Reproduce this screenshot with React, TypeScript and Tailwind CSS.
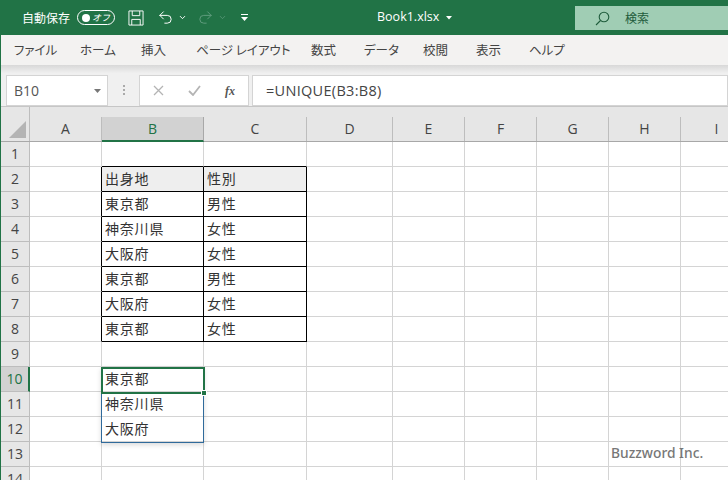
import { ChevronDown, Undo2, Redo2 } from "lucide-react";

const font = { jp: "font-['Noto_Sans_CJK_JP',sans-serif]" };

const columns = [
  { name: "A", width: "w-[72px]" },
  { name: "B", width: "w-[102px]" },
  { name: "C", width: "w-[103px]" },
  { name: "D", width: "w-[86px]" },
  { name: "E", width: "w-[72px]" },
  { name: "F", width: "w-[72px]" },
  { name: "G", width: "w-[72px]" },
  { name: "H", width: "w-[72px]" },
  { name: "I", width: "w-[72px]" },
];

const menus = [
  { label: "ファイル", width: "w-[66px]" },
  { label: "ホーム", width: "w-[61px]" },
  { label: "挿入", width: "w-[55px]" },
  { label: "ページ レイアウト", width: "w-[115px]" },
  { label: "数式", width: "w-[53px]" },
  { label: "データ", width: "w-[59px]" },
  { label: "校閲", width: "w-[53px]" },
  { label: "表示", width: "w-[53px]" },
  { label: "ヘルプ", width: "w-[60px]" },
];

const tableRows: Record<number, [string, string]> = {
  2: ["出身地", "性別"],
  3: ["東京都", "男性"],
  4: ["神奈川県", "女性"],
  5: ["大阪府", "女性"],
  6: ["東京都", "男性"],
  7: ["大阪府", "女性"],
  8: ["東京都", "女性"],
};

const spill: Record<number, string> = { 10: "東京都", 11: "神奈川県", 12: "大阪府" };

function TitleBar() {
  return (
    <div className="flex h-[35px] items-center bg-[#217346] text-white">
      <span className={`ml-[21px] text-[12px] ${font.jp}`}>自動保存</span>
      <div className="ml-[7px] flex h-[15px] w-[38px] shrink-0 items-center justify-between rounded-full border border-white pl-[4px] pr-[4px]">
        <div className="h-[8px] w-[8px] rounded-full bg-white" />
        <span className={`text-[9px] italic leading-none ${font.jp}`}>オフ</span>
      </div>
      <svg className="ml-[13px] shrink-0" width="16" height="16" viewBox="0 0 17 17" fill="none" stroke="#fff" strokeWidth="1">
        <path d="M1 1h15v15H1z" />
        <path d="M4.5 1v5h8V1M4 16v-6h9v6" />
      </svg>
      <Undo2 className="ml-[13px] shrink-0" size={17} strokeWidth={1.4} />
      <ChevronDown className="ml-[4px] shrink-0" size={9} strokeWidth={2.5} />
      <Redo2 className="ml-[10px] shrink-0 text-[#5f9c7d]" size={17} strokeWidth={1.4} />
      <ChevronDown className="ml-[4px] shrink-0 text-[#5f9c7d]" size={9} strokeWidth={2} />
      <svg className="ml-[13px] shrink-0" width="9" height="9" viewBox="0 0 9 9" fill="#fff">
        <path d="M1 1h7v1H1zM1 4h7L4.500 8z" />
      </svg>
      <div className="ml-[128px] flex w-[120px] shrink-0 items-center font-['Open_Sans',sans-serif] text-[12.5px]">
        <span>Book1.xlsx</span>
        <svg className="ml-[7px]" width="6" height="4" viewBox="0 0 6 4" fill="#fff">
          <path d="M0 0h6L3 3.500z" />
        </svg>
      </div>
      <div className="ml-[78px] mt-[1px] flex h-[24px] flex-1 items-center self-center bg-[#a0cdb4] text-[#1f5c3c]">
        <svg className="ml-[20px]" width="15" height="15" viewBox="0 0 15 15" fill="none" stroke="currentColor" strokeWidth="1.1">
          <circle cx="9" cy="6" r="4.800" />
          <path d="M5.500 9.500 1 14" />
        </svg>
        <span className={`ml-[15px] text-[12px] ${font.jp}`}>検索</span>
      </div>
    </div>
  );
}

function MenuBar() {
  return (
    <div className={`flex h-[30px] items-center bg-[#f3f2f1] pl-[13px] text-[12.5px] text-[#444] [font-feature-settings:'palt'] ${font.jp}`}>
      {menus.map((m) => (
        <span key={m.label} className={`${m.width} shrink-0`}>
          {m.label}
        </span>
      ))}
    </div>
  );
}

function FormulaBar() {
  return (
    <div className="h-[42px] border-b border-[#c6c6c6] bg-[#e6e6e6] bg-gradient-to-b from-[#d8d8d8] from-0% to-[#f0f0f0] to-[20%]">
      <div className="flex h-full items-end gap-0 pl-[5px]">
        <div className="flex h-[31px] w-[102px] items-center border border-[#d4d4d4] bg-white pl-[7px] pr-[6px] font-['Open_Sans',sans-serif] text-[14px] text-[#555]">
          <span className="flex-1">B10</span>
          <svg width="7" height="4" viewBox="0 0 7 4" fill="#777">
            <path d="M0 0h7L3.500 4z" />
          </svg>
        </div>
        <div className="flex h-[31px] w-[31px] items-center justify-center">
          <svg width="2" height="11" viewBox="0 0 2 11" fill="#aaa">
            <path d="M0 0h2v2H0zM0 4h2v2H0zM0 8h2v2H0z" />
          </svg>
        </div>
        <div className="flex h-[31px] w-[110px] items-center border border-[#d4d4d4] bg-white pl-[13px]">
          <svg width="11" height="11" viewBox="0 0 11 11" stroke="#b4b4b4" strokeWidth="1.300" fill="none">
            <path d="M1 1l9 9M10 1l-9 9" />
          </svg>
          <svg className="ml-[24px]" width="13" height="11" viewBox="0 0 13 11" stroke="#b4b4b4" strokeWidth="1.800" fill="none">
            <path d="M1 6l4 4 7-9" />
          </svg>
          <span className="ml-[24px] font-['Liberation_Serif',serif] text-[12px] font-bold italic text-[#555]">fx</span>
        </div>
        <div className="ml-[3px] flex h-[31px] flex-1 items-center border border-[#d4d4d4] bg-white pl-[13px] font-['Open_Sans',sans-serif] text-[14.5px] tracking-[0.3px] text-[#444]">
          =UNIQUE(B3:B8)
        </div>
      </div>
    </div>
  );
}

function ColumnHeaders() {
  return (
    <div className="flex h-[35px] border-b border-[#a8a8a8] bg-[#e6e6e6] font-['Open_Sans',sans-serif] text-[14px] text-[#444]">
      <div className="flex w-[29px] shrink-0 items-end justify-end border-r border-[#bdbdbd] pb-[3px] pr-[3px]">
        <svg width="17" height="17" viewBox="0 0 17 17" fill="#b4b4b4">
          <path d="M17 0v17H0z" />
        </svg>
      </div>
      {columns.map((c) =>
        c.name === "B" ? (
          <div key={c.name} className={`${c.width} mt-[10px] -mb-px flex shrink-0 items-center justify-center border-b-2 border-r border-[#217346] border-r-[#a8a8a8] bg-[#d2d2d2] pb-[1px] text-[#217346]`}>
            {c.name}
          </div>
        ) : (
          <div key={c.name} className={`${c.width} mt-[10px] flex shrink-0 items-center justify-center border-r border-[#bdbdbd] pb-[1px]`}>
            {c.name}
          </div>
        ),
      )}
    </div>
  );
}

function Cell({ col, row }: { col: string; row: number }) {
  const table = tableRows[row];
  let text = "";
  let cls = "border-r border-b border-[#d4d4d4]";
  if (table && col === "B") {
    text = table[0];
    cls = "border-r border-b border-black";
  } else if (table && col === "C") {
    text = table[1];
    cls = "border-r border-b border-black";
  } else if (col === "B" && spill[row]) {
    text = spill[row];
  }
  if (row === 1 && (col === "B" || col === "C")) cls = "border-r border-b border-b-black border-r-[#d4d4d4]";
  if (table && col === "A") cls = "border-r border-b border-[#d4d4d4] border-r-black";
  const head = row === 2 && (col === "B" || col === "C");
  return (
    <div className={`flex h-[25px] shrink-0 items-center pb-[2px] pl-[3px] ${cls} ${head ? "bg-[#eeeeee]" : ""} ${columns.find((c) => c.name === col)?.width}`}>
      <span className="tracking-[0.8px]">{text}</span>
    </div>
  );
}

function Sheet() {
  const rows = Array.from({ length: 14 }, (_, i) => i + 1);
  return (
    <div className={`relative flex-1 overflow-hidden bg-white text-[14px] text-[#333] ${font.jp}`}>
      {rows.map((r) => (
        <div key={r} className="flex">
          <div
            className={`flex h-[25px] w-[29px] shrink-0 items-center justify-center border-b border-r pb-[2px] font-['Open_Sans',sans-serif] text-[14px] ${
              r === 10
                ? "border-b-[#bdbdbd] border-r-2 border-r-[#217346] bg-[#d2d2d2] text-[#217346]"
                : "border-[#bdbdbd] bg-[#e6e6e6] text-[#444]"
            }`}
          >
            {r}
          </div>
          {columns.map((c) => (
            <Cell key={c.name} col={c.name} row={r} />
          ))}
        </div>
      ))}
      {/* spill range and active cell sit on top of the grid */}
      <div className="absolute left-[100px] top-[225px] h-[76px] w-[103px] border border-[#2f6a9b] shadow-[0_2px_5px_rgba(0,0,0,0.15)]" />
      <div className="absolute left-[100px] top-[225px] h-[27px] w-[104px] border-2 border-[#217346]" />
      <div className="absolute left-[200px] top-[248px] h-[6px] w-[6px] border border-white bg-[#217346]" />
      <div className="absolute left-[610px] top-[301px] font-['Noto_Sans',sans-serif] text-[13.8px] font-medium text-[#777]">
        Buzzword Inc.
      </div>
    </div>
  );
}

export default function App() {
  return (
    <div className="flex h-[480px] w-[728px] flex-col overflow-hidden border-l border-l-[#217346]">
      <TitleBar />
      <MenuBar />
      <FormulaBar />
      <ColumnHeaders />
      <Sheet />
    </div>
  );
}
